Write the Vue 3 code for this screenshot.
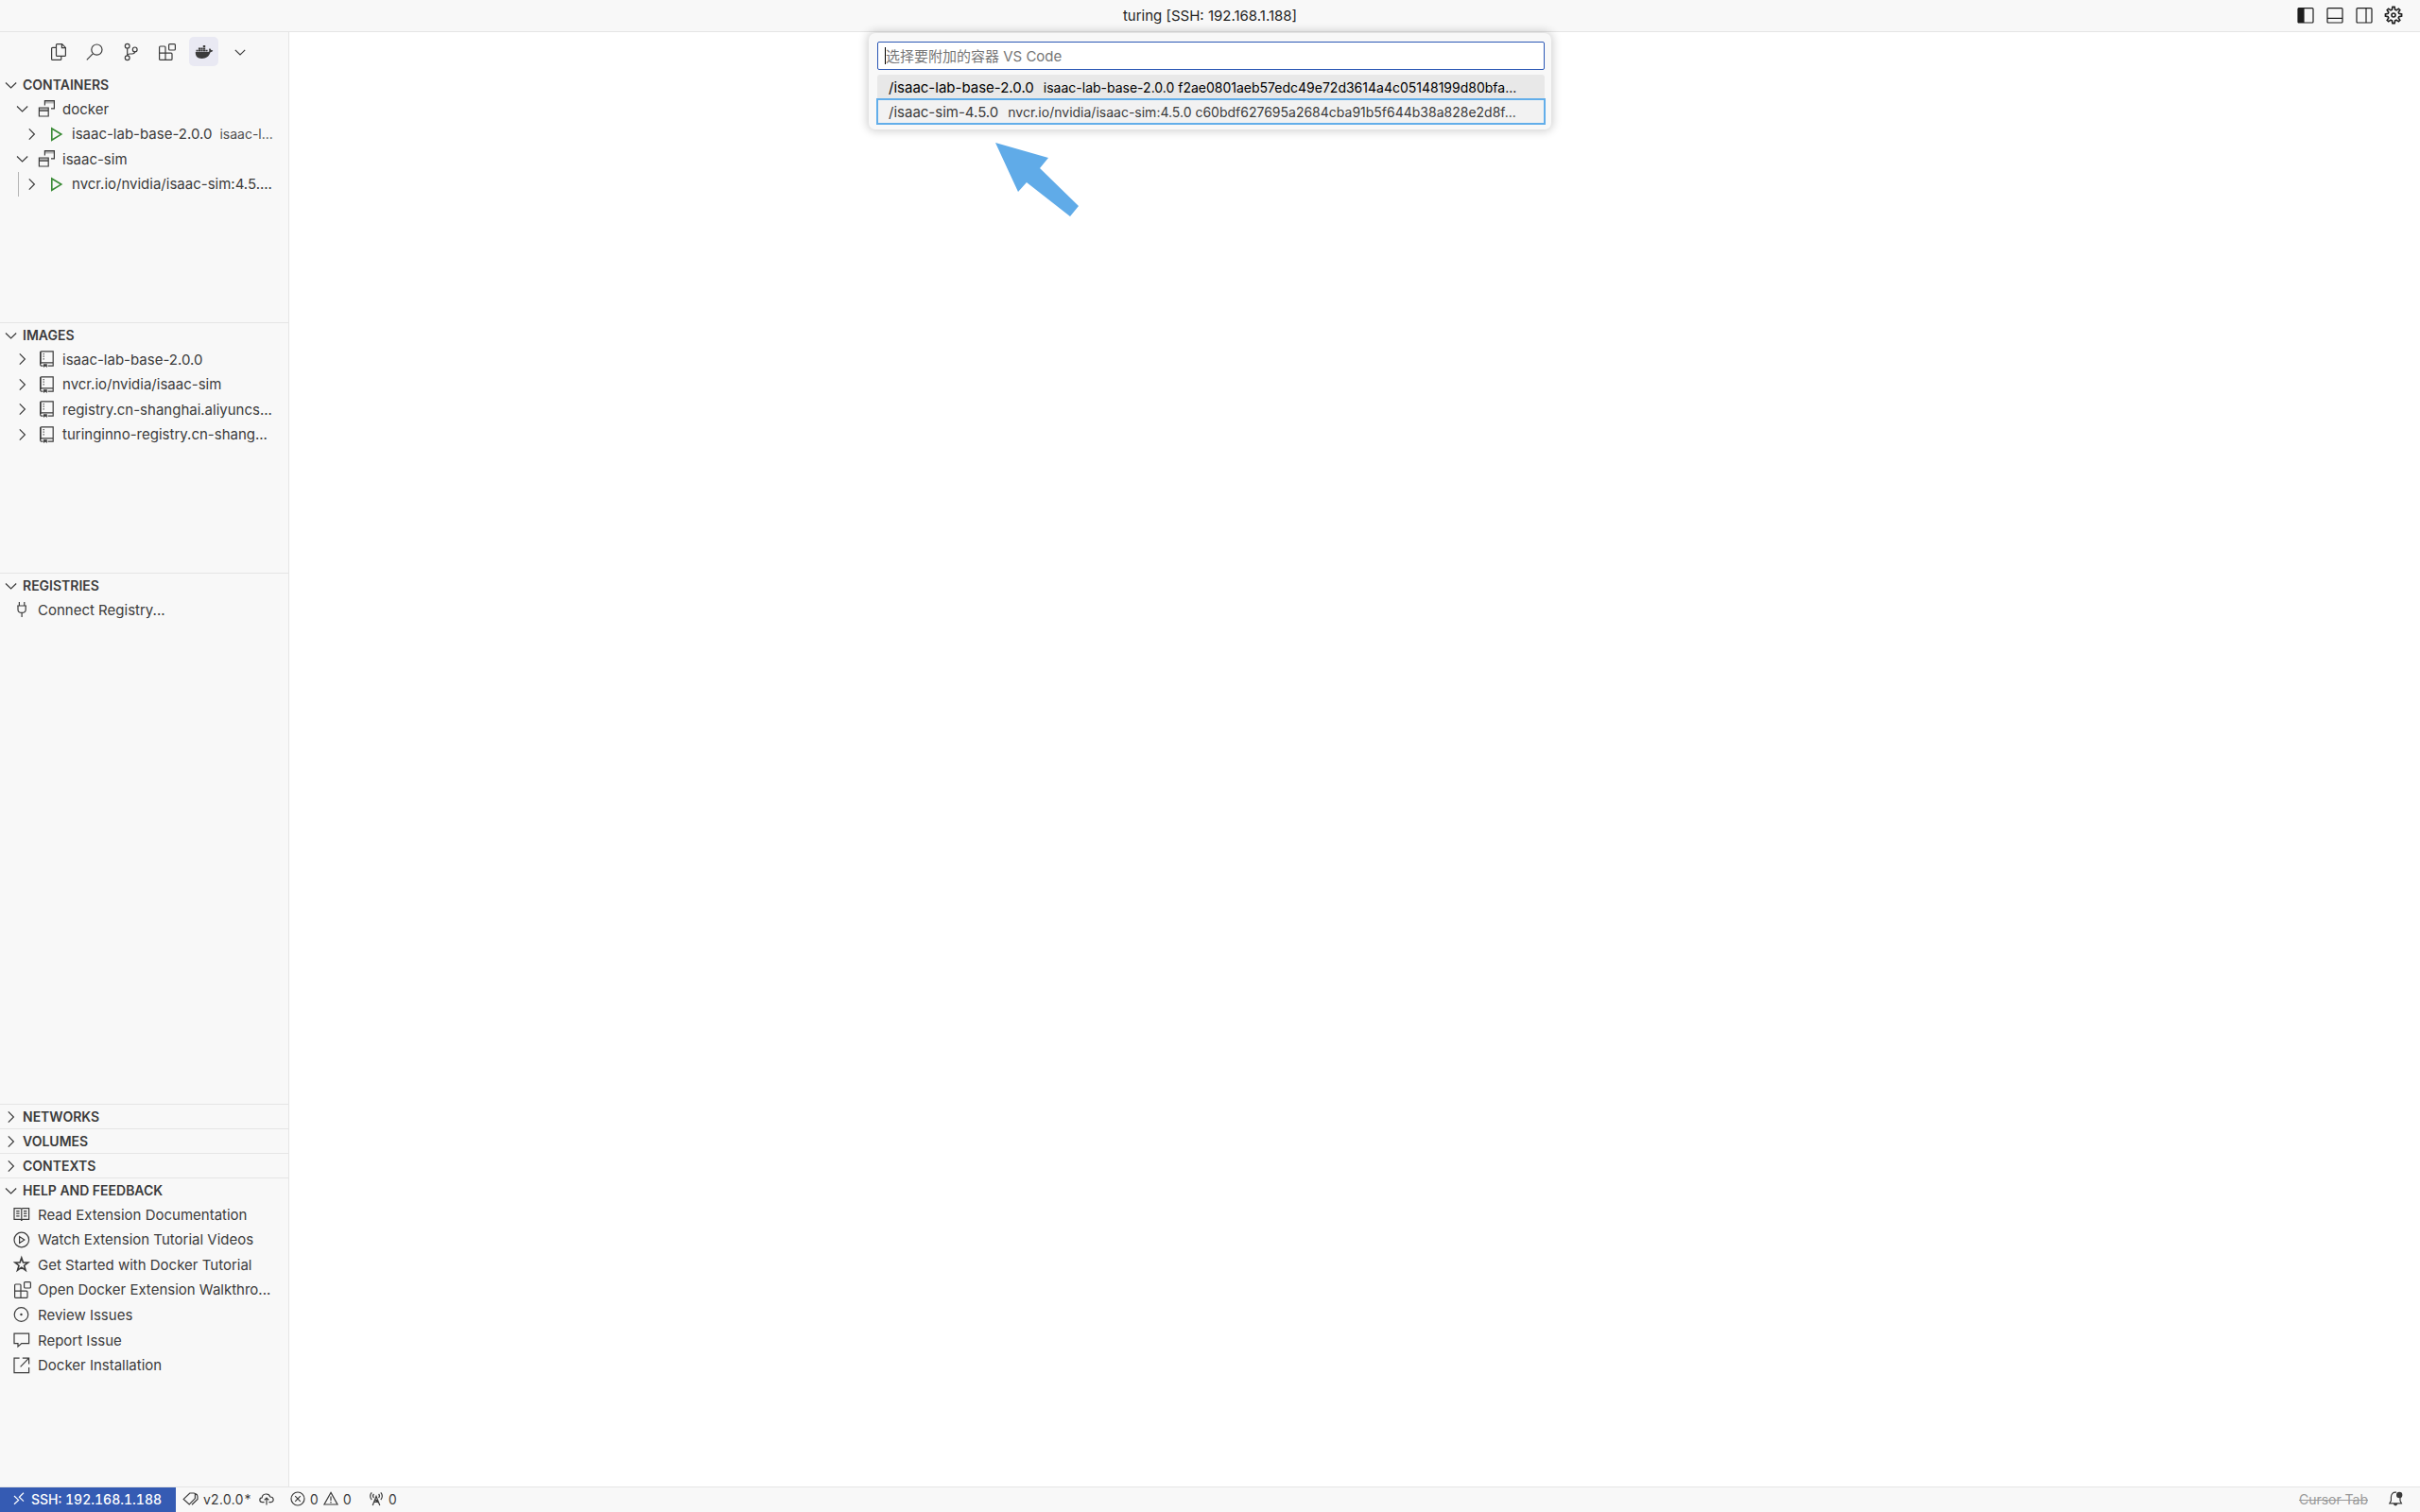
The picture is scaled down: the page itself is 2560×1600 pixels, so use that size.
<script setup>
import { h, ref } from 'vue'

// Each icon is a list of paths on a 20x20 grid, filled ones are marked with fill
const icons = {
  down: [{ d: 'M4 7.5L9.6 13L15.2 7.5' }],
  right: [{ d: 'M6.8 4.4L12.4 10L6.8 15.6' }],
  more: [{ d: 'M4.8 7.8L10 13L15.2 7.8' }],
  files: [
    { d: 'M8.5 1.6H13.6L17.4 5.4V13.4Q17.4 14.4 16.4 14.4H8.5Q7.5 14.4 7.5 13.4V2.6Q7.5 1.6 8.5 1.6Z' },
    { d: 'M13.4 1.6V5.6H17.4M7.5 5.4H3.6Q2.6 5.4 2.6 6.4V17.4Q2.6 18.4 3.6 18.4H11.8Q12.8 18.4 12.8 17.4V14.4' }
  ],
  search: [{ d: 'M18 7.6A5.6 5.6 0 1 1 6.8 7.6A5.6 5.6 0 1 1 18 7.6ZM8.4 11.6L1.8 18.4' }],
  branch: [
    { d: 'M8.1 3.8A2.4 2.4 0 1 1 3.3 3.8A2.4 2.4 0 1 1 8.1 3.8ZM8.1 16.2A2.4 2.4 0 1 1 3.3 16.2A2.4 2.4 0 1 1 8.1 16.2ZM16.1 7.4A2.4 2.4 0 1 1 11.3 7.4A2.4 2.4 0 1 1 16.1 7.4Z' },
    { d: 'M5.7 6.2V13.8M13.7 9.8C13.5 11.6 12.4 12 10.8 12H8.6C6.8 12 5.9 12.8 5.7 13.8' }
  ],
  extensions: [
    { d: 'M12.6 1.6H17.4Q18.4 1.6 18.4 2.6V7Q18.4 8 17.4 8H12.6Q11.6 8 11.6 7V2.6Q11.6 1.6 12.6 1.6Z' },
    { d: 'M2.6 4H7Q8 4 8 5V11.2H14Q15 11.2 15 12.2V17.4Q15 18.4 14 18.4H2.6Q1.6 18.4 1.6 17.4V5Q1.6 4 2.6 4ZM1.6 11.2H8V18.4' }
  ],
  docker: [
    { fill: true, d: 'M8.8 3H11.2V5H8.8ZM3.9 5.4H6.1V7.4H3.9ZM6.4 5.4H8.6V7.4H6.4ZM8.9 5.4H11.2V7.4H8.9ZM1.5 7.8H3.6V9.6H1.5ZM3.9 7.8H6.1V9.6H3.9ZM6.4 7.8H8.6V9.6H6.4ZM8.9 7.8H11.2V9.6H8.9ZM11.5 7.8H13.6V9.6H11.5Z' },
    { fill: true, d: 'M.8 10H14Q15 9.8 15.4 9.3Q14.6 7.6 15.8 6Q17.2 6.9 17.3 8.1Q18.6 7.9 19.3 8.6Q18.6 10.2 16.6 10.2C15 14.8 12 16.9 7.6 16.9C3 16.9.6 14.6.8 10Z' }
  ],
  group: [
    { d: 'M1.4 9H11.2V18H1.4ZM1.4 12.2H11.2M7.4 6.6V1.6H17.4V9.8H14' },
    { fill: true, faint: true, d: 'M1.4 9H11.2V12.2H1.4ZM7.4 1.6H17.4V4.4H7.4Z' }
  ],
  play: [{ wide: true, d: 'M4.8 4V16.2L14.8 10.1Z' }],
  repo: [
    { d: 'M5.6 17.2H4Q2.6 17.2 2.6 15.6V3Q2.6 1.8 3.8 1.8H16.2V17.2H10.6M2.6 15.6Q2.6 13.8 4.2 13.8H16.2' },
    { wide: true, d: 'M2.9 2.6V14.6' },
    { fill: true, d: 'M5.6 4H6.8V5.2H5.6ZM5.6 6.6H6.8V7.8H5.6ZM5.6 9.2H6.8V10.4H5.6ZM6 15.2H9.8V19L7.9 17.4L6 19Z' }
  ],
  plug: [{ d: 'M6.4 2V6M11.8 2V6M4.2 6H14M5 6V10.2Q5.2 13.4 9.1 13.4T13.2 10.2V6M9.1 13.4V18' }],
  book: [
    { d: 'M1 3.6H7.6Q8.8 3.6 8.8 4.6Q8.8 3.6 10 3.6H16.6V15.4H10Q8.8 15.4 8.8 17Q8.8 15.4 7.6 15.4H1ZM8.8 4.6V16.4' },
    { d: 'M3.2 6.6H6.6M3.2 9.2H6.6M3.2 11.8H6.6M11 6.6H14.4M11 9.2H14.4M11 11.8H14.4' }
  ],
  playCircle: [{ d: 'M16.6 10A7.8 7.8 0 1 1 1 10A7.8 7.8 0 1 1 16.6 10ZM6.6 6.6V13.4L11.8 10Z' }],
  star: [{ wide: true, d: 'M8.8 3L10.5 8H15.7L11.6 11.2L13.1 16.2L8.8 13.2L4.5 16.2L6 11.2L1.9 8H7.1Z' }],
  issue: [
    { d: 'M15.8 9A7.3 7.3 0 1 1 1.2 9A7.3 7.3 0 1 1 15.8 9Z' },
    { fill: true, d: 'M9.7 9A1.2 1.2 0 1 1 7.3 9A1.2 1.2 0 1 1 9.7 9Z' }
  ],
  comment: [{ d: 'M1 3.2H16.6V13.6H8.8L5 17V13.6H1Z' }],
  link: [{ d: 'M6.6 2.2H1V17.6H16.6V12M9.8 2.2H16.6V8.6M16.6 2.2L7.6 11.4' }],
  sidebarLeft: [
    { d: 'M3 2.6H17Q18 2.6 18 3.6V17Q18 18 17 18H3Q2 18 2 17V3.6Q2 2.6 3 2.6Z' },
    { fill: true, d: 'M2 2.6H8.6V18H2Z' }
  ],
  panel: [{ d: 'M3 2.6H17Q18 2.6 18 3.6V17Q18 18 17 18H3Q2 18 2 17V3.6Q2 2.6 3 2.6ZM2 13.4H18' }],
  sidebarRight: [{ d: 'M3 2.6H17Q18 2.6 18 3.6V17Q18 18 17 18H3Q2 18 2 17V3.6Q2 2.6 3 2.6ZM12 2.6V18' }],
  gear: [
    { wide: true, d: 'M8.4 4.2L8.9 1.4H11.1L11.6 4.2L13 4.8L15.3 3.2L16.8 4.7L15.2 7L15.8 8.4L18.6 8.9V11.1L15.8 11.6L15.2 13L16.8 15.3L15.3 16.8L13 15.2L11.6 15.8L11.1 18.6H8.9L8.4 15.8L7 15.2L4.7 16.8L3.2 15.3L4.8 13L4.2 11.6L1.4 11.1V8.9L4.2 8.4L4.8 7L3.2 4.7L4.7 3.2L7 4.8Z' },
    { wide: true, d: 'M12 10A2 2 0 1 1 8 10A2 2 0 1 1 12 10Z' }
  ],
  remote: [{ d: 'M5 7L9.6 11.4L5 15.8M15 3.8L10.4 8.2L15 12.6' }],
  tag: [
    { d: 'M2.2 10.4L8.8 4H13.2Q14.4 4 14.4 5.2V9.6L8.2 16ZM14.6 4.6Q17 5.4 17 7.4V10.4L11 16.2' }
  ],
  cloud: [{ d: 'M7.6 13.6H5.4C2 13.6 2 9 5.2 8.8C5.6 4.2 12.4 3.6 13.8 8C18.2 8 18 13.6 14.8 13.6H12.4M10 16.6V9.2M7.6 11.4L10 9L12.4 11.4' }],
  error: [{ d: 'M17 10A7 7 0 1 1 3 10A7 7 0 1 1 17 10ZM7.2 7.2L12.8 12.8M12.8 7.2L7.2 12.8' }],
  warning: [{ d: 'M10 3.4L17 16H3ZM10 7.4V12M10 13V14.4' }],
  tower: [{ d: 'M6.2 17L10 7.4L13.8 17M7.6 13.4H12.4M9 10.6L12.6 14.4M8.4 11.6H11.6M7.4 9A3 3 0 0 1 7.4 5M12.6 9A3 3 0 0 0 12.6 5M5.2 11A6 6 0 0 1 5.2 3.4M14.8 11A6 6 0 0 0 14.8 3.4' }],
  bell: [
    { d: 'M11 3.2C7.4 2.6 5.4 5.4 5.4 8.2V12L3.8 14.8H16.4L15 12V9' },
    { fill: true, d: 'M17.4 6A3.2 3.2 0 1 1 11 6A3.2 3.2 0 1 1 17.4 6ZM7.8 15H12.4Q12 17.4 10.1 17.4T7.8 15Z' }
  ]
}

const Icon = ({ name }) =>
  h(
    'svg',
    { class: 'icon', viewBox: '0 0 20 20', 'aria-hidden': 'true' },
    icons[name].map((p) =>
      h('path', {
        d: p.d,
        fill: p.fill ? 'currentColor' : 'none',
        'fill-opacity': p.faint ? 0.35 : 1,
        stroke: p.fill ? 'none' : 'currentColor',
        'stroke-width': p.wide ? 1.6 : 1.2
      })
    )
  )
Icon.props = ['name']

const views = [
  { icon: 'files', label: 'Explorer' },
  { icon: 'search', label: 'Search' },
  { icon: 'branch', label: 'Source Control' },
  { icon: 'extensions', label: 'Extensions' },
  { icon: 'docker', label: 'Docker' },
  { icon: 'more', label: 'More views' }
]
const activeView = ref('docker')

const layoutActions = [
  { icon: 'sidebarLeft', label: 'Toggle primary side bar' },
  { icon: 'panel', label: 'Toggle panel' },
  { icon: 'sidebarRight', label: 'Toggle secondary side bar' },
  { icon: 'gear', label: 'Settings' }
]

const sections = [
  {
    title: 'CONTAINERS',
    size: 'medium',
    rows: [
      { level: 1, chevron: 'down', icon: 'group', text: 'docker' },
      { level: 2, chevron: 'right', icon: 'play', text: 'isaac-lab-base-2.0.0', detail: 'isaac-l...' },
      { level: 1, chevron: 'down', icon: 'group', text: 'isaac-sim' },
      { level: 2, chevron: 'right', icon: 'play', text: 'nvcr.io/nvidia/isaac-sim:4.5....', guide: true }
    ]
  },
  {
    title: 'IMAGES',
    size: 'medium',
    rows: [
      { level: 1, chevron: 'right', icon: 'repo', text: 'isaac-lab-base-2.0.0' },
      { level: 1, chevron: 'right', icon: 'repo', text: 'nvcr.io/nvidia/isaac-sim' },
      { level: 1, chevron: 'right', icon: 'repo', text: 'registry.cn-shanghai.aliyuncs...' },
      { level: 1, chevron: 'right', icon: 'repo', text: 'turinginno-registry.cn-shang...' }
    ]
  },
  {
    title: 'REGISTRIES',
    size: 'fill',
    rows: [{ level: 1, icon: 'plug', text: 'Connect Registry...' }]
  },
  { title: 'NETWORKS', size: 'closed', rows: [] },
  { title: 'VOLUMES', size: 'closed', rows: [] },
  { title: 'CONTEXTS', size: 'closed', rows: [] },
  {
    title: 'HELP AND FEEDBACK',
    size: 'large',
    rows: [
      { level: 1, icon: 'book', text: 'Read Extension Documentation' },
      { level: 1, icon: 'playCircle', text: 'Watch Extension Tutorial Videos' },
      { level: 1, icon: 'star', text: 'Get Started with Docker Tutorial' },
      { level: 1, icon: 'extensions', text: 'Open Docker Extension Walkthro...' },
      { level: 1, icon: 'issue', text: 'Review Issues' },
      { level: 1, icon: 'comment', text: 'Report Issue' },
      { level: 1, icon: 'link', text: 'Docker Installation' }
    ]
  }
]

const filter = ref('')
const picks = [
  { name: '/isaac-lab-base-2.0.0', detail: 'isaac-lab-base-2.0.0 f2ae0801aeb57edc49e72d3614a4c05148199d80bfa...', state: 'focused' },
  { name: '/isaac-sim-4.5.0', detail: 'nvcr.io/nvidia/isaac-sim:4.5.0 c60bdf627695a2684cba91b5f644b38a828e2d8f...', state: 'marked' }
]
</script>

<template>
  <div class="window">
    <header class="titlebar">
      <span class="title">turing [SSH: 192.168.1.188]</span>
      <div class="layout-actions">
        <button v-for="a in layoutActions" :key="a.icon" type="button" :aria-label="a.label">
          <Icon :name="a.icon" />
        </button>
      </div>
    </header>

    <div class="body">
      <aside class="sidebar">
        <nav class="views">
          <button
            v-for="v in views"
            :key="v.icon"
            type="button"
            class="view"
            :class="{ active: v.icon === activeView }"
            :aria-label="v.label"
            @click="activeView = v.icon"
          >
            <Icon :name="v.icon" />
          </button>
        </nav>

        <section v-for="s in sections" :key="s.title" class="section" :class="s.size">
          <button type="button" class="section-title">
            <Icon :name="s.size === 'closed' ? 'right' : 'down'" />
            <span>{{ s.title }}</span>
          </button>
          <ul v-if="s.rows.length" class="tree">
            <li v-for="r in s.rows" :key="r.text">
              <button type="button" class="row" :class="['level-' + r.level, { guide: r.guide }]">
                <Icon v-if="r.chevron" :name="r.chevron" />
                <Icon :name="r.icon" :class="{ running: r.icon === 'play' }" />
                <span>{{ r.text }}</span>
                <span v-if="r.detail" class="row-detail">{{ r.detail }}</span>
              </button>
            </li>
          </ul>
        </section>
      </aside>

      <main class="editor" />
    </div>

    <footer class="statusbar">
      <button type="button" class="remote"><Icon name="remote" /><span>SSH: 192.168.1.188</span></button>
      <button type="button" class="status version"><Icon name="tag" /><span>v2.0.0*</span><Icon name="cloud" class="sync" /></button>
      <button type="button" class="status problems">
        <Icon name="error" /><span>0</span><Icon name="warning" /><span>0</span>
      </button>
      <button type="button" class="status ports"><Icon name="tower" /><span>0</span></button>
      <button type="button" class="status cursor-tab">Cursor Tab</button>
      <button type="button" class="status bell" aria-label="Notifications"><Icon name="bell" /></button>
    </footer>

    <div class="quick-pick">
      <div class="filter">
        <input v-model="filter" type="text" placeholder="选择要附加的容器 VS Code" aria-label="选择要附加的容器 VS Code" />
        <span class="caret" aria-hidden="true" />
      </div>
      <button v-for="p in picks" :key="p.name" type="button" class="pick" :class="p.state">
        <span>{{ p.name }}</span>
        <span class="pick-detail">{{ p.detail }}</span>
      </button>
      <svg class="pointer" viewBox="0 0 90 80" aria-hidden="true">
        <path d="M1 1L57 17L48 28L89 68L80 79L34 43L25 53Z" />
      </svg>
    </div>
  </div>
</template>

<style>
body {
  margin: 0;
}
</style>

<style scoped>
.window {
  position: relative;
  display: flex;
  flex-direction: column;
  height: 100vh;
  overflow: hidden;
  background: #fff;
  color: #3b3b3b;
  font-family: Inter, 'Noto Sans CJK SC', sans-serif;
  font-size: 15px;
}

button {
  display: flex;
  align-items: center;
  margin: 0;
  padding: 0;
  border: 0;
  background: none;
  color: inherit;
  font: inherit;
  white-space: nowrap;
}

.icon {
  flex: none;
  width: 20px;
  height: 20px;
}

/* title bar */
.titlebar {
  position: relative;
  display: flex;
  align-items: center;
  justify-content: center;
  box-sizing: border-box;
  height: 34px;
  padding-bottom: 1px;
  border-bottom: 1px solid #e5e5e5;
  background: #f8f8f8;
  color: #1e1e1e;
}

.layout-actions {
  position: absolute;
  right: 18px;
  display: flex;
  gap: 11px;
}

/* side bar */
.body {
  display: flex;
  flex: 1;
  min-height: 0;
}

.sidebar {
  display: flex;
  flex-direction: column;
  box-sizing: border-box;
  width: 306px;
  border-right: 1px solid #e5e5e5;
  background: #f8f8f8;
}

.editor {
  flex: 1;
}

.views {
  display: flex;
  justify-content: space-between;
  height: 37px;
  padding: 5px 35px 0 46px;
}

.view {
  justify-content: center;
  width: 31px;
  height: 31px;
  border-radius: 5px;
}

.view.active {
  background: #e9e9f3;
}

.section {
  box-sizing: border-box;
  border-top: 1px solid #e5e5e5;
}

.views + .section {
  border-top-color: transparent;
}

.medium {
  height: 265px;
}

.large {
  height: 327px;
}

.fill {
  flex: 1;
}

.section-title {
  gap: 2px;
  width: 100%;
  height: 25px;
  padding-left: 2px;
  font-size: 14px;
  font-weight: 600;
}

.tree {
  display: grid;
  margin: 0;
  padding: 0;
  list-style: none;
}

.medium .tree {
  height: 106px;
}

.large .tree {
  height: 186px;
}

.row {
  gap: 6px;
  width: 100%;
  height: 100%;
  min-height: 26px;
}

.level-1 {
  padding-left: 14px;
}

.level-2 {
  padding-left: 24px;
}

.guide {
  background: linear-gradient(#b5b5b5, #b5b5b5) 19px 0 / 1px 100% no-repeat;
}

.running {
  color: #388a34;
}

.row-detail {
  margin-left: 2px;
  font-size: 14px;
  opacity: 0.9;
}

/* status bar */
.statusbar {
  display: flex;
  box-sizing: border-box;
  height: 27px;
  border-top: 1px solid #e5e5e5;
  background: #f8f8f8;
  font-size: 14px;
  font-variant-numeric: tabular-nums;
}

.remote {
  gap: 3px;
  box-sizing: border-box;
  min-width: 186px;
  padding: 0 10px 2px;
  background: #355bb3;
  color: #fff;
  font-weight: 500;
}

.status {
  gap: 3px;
  padding-bottom: 2px;
}

.version {
  padding-left: 6px;
}

.sync {
  margin-left: 2px;
}

.problems {
  padding-left: 13px;
}

.ports {
  padding-left: 16px;
}

.cursor-tab {
  margin-left: auto;
  color: #999;
  text-decoration: line-through;
}

.bell {
  padding-right: 16px;
  padding-left: 19px;
}

/* quick pick */
.quick-pick {
  position: absolute;
  top: 35px;
  left: 50%;
  box-sizing: border-box;
  width: 722px;
  padding: 9px 7px 6px 9px;
  border-radius: 7px;
  background: #f8f8f8;
  box-shadow: 0 0 10px 2px rgba(0, 0, 0, 0.18);
  transform: translateX(-50%);
}

.filter {
  position: relative;
  margin-bottom: 5px;
}

.filter input {
  display: block;
  box-sizing: border-box;
  width: 100%;
  height: 30px;
  padding: 0 8px;
  border: 1px solid #2b57b5;
  border-radius: 2px;
  outline: none;
  background: #fff;
  color: #3b3b3b;
  font: inherit;
}

.filter input::placeholder {
  color: #767676;
  opacity: 1;
}

.caret {
  position: absolute;
  top: 6px;
  left: 8px;
  width: 1px;
  height: 18px;
  background: #000;
}

.pick {
  gap: 10px;
  box-sizing: border-box;
  width: 100%;
  height: 26px;
  padding: 0 12px;
}

.pick.focused {
  border-radius: 3px 3px 0 0;
  background: #e8e8e8;
  color: #000;
}

.pick.marked {
  background: #f2f2f2;
  outline: 2px solid #62aeea;
  outline-offset: -1px;
}

.pick-detail {
  font-size: 14px;
}

.pointer {
  position: absolute;
  top: 115px;
  left: 133px;
  width: 90px;
  height: 80px;
  fill: #60abe8;
}
</style>
